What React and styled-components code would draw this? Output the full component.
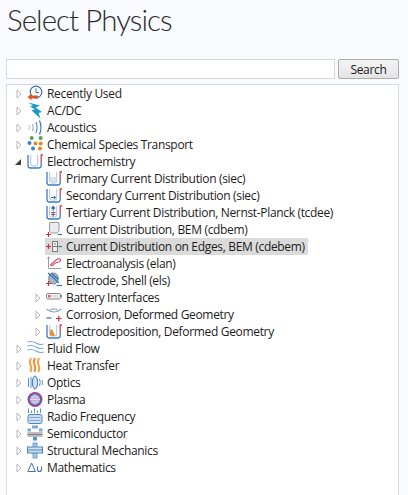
import React from 'react'
import styled, { createGlobalStyle } from 'styled-components'

const Global = createGlobalStyle`
  html, body { margin: 0; padding: 0; background: #f9fbff; }
  body { font-family: "Open Sans", "Noto Sans", sans-serif; color: #1a1a1a; }
`

const Page = styled.div`
  width: 408px;
  height: 495px;
  overflow: hidden;
  padding: 0 9px 0 6px;
  box-sizing: border-box;
`
const Title = styled.h1`
  margin: 0;
  height: 59px;
  padding-left: 1px;
  font-family: Lato, "Open Sans", sans-serif;
  font-size: 29.5px;
  line-height: 39px;
  font-weight: 300;
  letter-spacing: -0.95px;
  color: #2b2b2b;
`
const SearchBar = styled.div`
  display: flex;
  gap: 3px;
  height: 20px;
  margin-bottom: 5px;
`
const SearchInput = styled.input`
  width: 329px;
  height: 20px;
  padding: 0;
  box-sizing: border-box;
  border: 1px solid #d6d8da;
  background: #fff;
  outline: none;
`
const SearchButton = styled.button`
  width: 61px;
  height: 20px;
  padding: 0;
  box-sizing: border-box;
  border: 1px solid #acacac;
  border-radius: 2px;
  background: linear-gradient(#f4f4f4, #e4e4e4);
  font-family: inherit;
  font-size: 12px;
  letter-spacing: -0.3px;
  color: #1a1a1a;
`
const Tree = styled.div`
  height: 420px;
  box-sizing: border-box;
  border: 1px solid #d6d8da;
  border-bottom: 0;
  background: #fff;
`
const Row = styled.div`
  display: flex;
  align-items: center;
  height: 17px;
  padding-left: ${p => p.$indent}px;
`
const Arrow = styled.span`
  flex: none;
  width: 12px;
  height: 17px;
  display: flex;
  align-items: center;
  justify-content: flex-start;
`
const IconBox = styled.svg`
  flex: none;
  width: 18px;
  height: 17px;
  margin-right: 2px;
`
const Label = styled.span`
  padding: 0 3px 0 0;
  height: 17px;
  line-height: 17px;
  font-size: 12px;
  letter-spacing: -0.33px;
  white-space: nowrap;
  color: #1c1c1c;
`
const Selection = styled.div`
  display: flex;
  align-items: center;
  height: 17px;
  margin-left: -1px;
  padding-left: 1px;
  background: ${p => (p.$on ? '#dbdbdb' : 'transparent')};
`

const Expander = ({ open }) => (
  <Arrow>
    <svg width="8" height="10" viewBox="0 0 8 10">
      {open
        ? <path d="M0 8 L6 8 L6 2 Z" fill="#404040" />
        : <path d="M2 1 L6 5 L2 9 Z" fill="#fff" stroke="#b8b8b8" />}
    </svg>
  </Arrow>
)

const beaker = (
  <>
    <path d="M1 2 V12.5 Q1 15 3.5 15 H11.5 Q14.2 15 14.2 12.5 V9" fill="none" stroke="#3f7cc2" strokeWidth="1.3" />
    <path d="M3.7 2 V11 Q3.7 13 5.5 13 H9 Q10.7 13 10.7 11 V2" fill="none" stroke="#a9c5e4" strokeWidth="1" />
    <path d="M14.2 9 V2 H16" fill="none" stroke="#d4405a" strokeWidth="1.3" />
  </>
)

const icons = {
  recent: (
    <>
      <circle cx="9" cy="7" r="5.8" fill="#fff" stroke="#3f6fa8" strokeWidth="1.2" />
      <path d="M9 3.2 V7.5 H12" fill="none" stroke="#3f6fa8" />
      <path d="M0.5 12 L4.5 8.8 V10.5 H11 V13.5 H4.5 V15.2 Z" fill="#e0542c" />
    </>
  ),
  acdc: (
    <path d="M1 0.5 L13 3.5 L8.5 5.5 L15 10 L11.5 11 L13.5 16.5 L4.5 8.5 L8 7.5 L3 4.5 L6 3.5 Z" fill="#1a9bc6" />
  ),
  acoustics: (
    <>
      <path d="M2 6 Q3 8.5 2 11" fill="none" stroke="#a9c8e6" />
      <path d="M5.5 5 Q7 8.5 5.5 12" fill="none" stroke="#7ba8d6" />
      <path d="M9 3 Q11 8.5 9 14" fill="none" stroke="#4f88c4" strokeWidth="1.1" />
      <path d="M12.5 1.5 Q15.5 8.5 12.5 15.5" fill="none" stroke="#3b74b5" strokeWidth="1.2" />
    </>
  ),
  chemical: (
    <>
      <circle cx="4.7" cy="2" r="2" fill="#4ea64e" />
      <circle cx="13.7" cy="2" r="2" fill="#4ea64e" />
      <circle cx="2.5" cy="7" r="2" fill="#3c7fc4" />
      <circle cx="8.5" cy="7.5" r="2" fill="#e08a2a" />
      <circle cx="13.7" cy="7.5" r="2" fill="#e08a2a" />
      <circle cx="6" cy="12.5" r="2" fill="#3c7fc4" />
      <circle cx="13" cy="12.5" r="2" fill="#e08a2a" />
    </>
  ),
  electrochem: beaker,
  primary: <>{beaker}<rect x="4" y="7" width="6.4" height="5.7" fill="#d5e2f2" /></>,
  secondary: <>{beaker}<path d="M5 10.5 H9.5 M8 9 L9.7 10.5 L8 12" fill="none" stroke="#3f6fa8" /></>,
  tertiary: (
    <>
      {beaker}
      <path d="M7.2 2.5 V7 M5.4 4.5 L7.2 2.5 L9 4.5" fill="none" stroke="#3f6fa8" strokeWidth="1.2" />
      <path d="M5 8.5 H9.5 M5 10.5 H9.5" stroke="#d4405a" />
      <path d="M7.2 8 V12.5" stroke="#3f6fa8" strokeWidth="1.2" />
    </>
  ),
  bem: (
    <>
      <path d="M3.5 1.5 H13 V10 L11 12 H5.5 L3.5 10 Z" fill="#ececec" stroke="#9a9a9a" />
      <path d="M0 13.5 H5 M2.5 11 V16" stroke="#d02a44" strokeWidth="1.2" />
      <path d="M11.5 13.5 H16" stroke="#3f6fa8" strokeWidth="1.2" />
    </>
  ),
  edges: (
    <>
      <path d="M0 8.5 H5 M2.5 6 V11" stroke="#d02a44" strokeWidth="1.2" />
      <rect x="6.5" y="3.5" width="5" height="10" fill="#eee" stroke="#7a7a7a" />
      <path d="M6.5 8.5 L11.5 8.5 M8 6 H10" stroke="#7a7a7a" />
      <path d="M12.5 8.5 H16" stroke="#3f6fa8" strokeWidth="1.2" />
    </>
  ),
  elan: (
    <>
      <path d="M2.5 1.5 V13.5 H15.5" fill="none" stroke="#9aa0a8" />
      <path d="M1 3 H4" stroke="#9aa0a8" />
      <path d="M4.5 10 L10 5 Q13 3 14.5 4.5 Q15 6.5 12.5 7 Q9 7.5 7 10 Q5.5 11.5 4.5 10 Z" fill="#fff" stroke="#d8506a" strokeWidth="1.1" />
    </>
  ),
  shell: (
    <>
      <ellipse cx="7.5" cy="6.5" rx="4.8" ry="5.5" fill="#aab8c8" stroke="#6c7f95" />
      <path d="M2 1 L13 11 M5 1 L12 7" stroke="#2f73b5" strokeWidth="1.2" />
      <path d="M0 11.5 H5 M2.5 9 V14" stroke="#d02a44" strokeWidth="1.2" />
      <path d="M10.5 13.5 H16" stroke="#3f6fa8" strokeWidth="1.2" />
    </>
  ),
  battery: (
    <>
      <rect x="0.5" y="4.5" width="14" height="5.5" rx="1.5" fill="#f4f4f4" stroke="#8a8a8a" />
      <rect x="2" y="6" width="2.5" height="2.5" fill="#e35a5a" />
      <rect x="5" y="6" width="8" height="2.5" fill="#e0e0e0" />
      <rect x="14.5" y="6" width="1.5" height="2.5" fill="#8a8a8a" />
    </>
  ),
  corrosion: (
    <>
      <path d="M0.5 3 Q8 9 15.5 3" fill="none" stroke="#7ba8d6" strokeWidth="1.2" />
      <path d="M4 4 Q8 1.5 12 4" fill="none" stroke="#9a9a9a" />
      <path d="M0.5 12 H5.5" stroke="#3f6fa8" strokeWidth="1.2" />
      <path d="M10 12.5 H15.5 M12.8 10 V15.5" stroke="#d02a44" strokeWidth="1.2" />
    </>
  ),
  deposition: (
    <>
      {beaker}
      <path d="M4.2 12.7 V8 Q5.5 4 7 8.5 Q8.5 11 9 12.7 Z" fill="#ec8a2e" />
    </>
  ),
  fluid: (
    <>
      <path d="M0.5 2 Q5 0.5 9 3 T16.5 4" fill="none" stroke="#7ba8d6" strokeWidth="1.1" />
      <path d="M0.5 6 Q5 4.5 9 7 T16.5 8" fill="none" stroke="#7ba8d6" strokeWidth="1.1" />
      <path d="M0.5 10 Q5 8.5 9 11 T16.5 12" fill="none" stroke="#7ba8d6" strokeWidth="1.1" />
    </>
  ),
  heat: (
    <>
      <path d="M4 1 Q2 5 3.5 8 Q5 11 3.5 15" fill="none" stroke="#f4a449" strokeWidth="2" />
      <path d="M8 1 Q6 5 7.5 8 Q9 11 7.5 15" fill="none" stroke="#ef8f2f" strokeWidth="2" />
      <path d="M12 1 Q10 5 11.5 8 Q13 11 11.5 15" fill="none" stroke="#f4a449" strokeWidth="2" />
    </>
  ),
  optics: (
    <>
      <path d="M1.5 4 V13 M4 3 V14" stroke="#5b8fcb" />
      <ellipse cx="8" cy="8.5" rx="2.6" ry="6.5" fill="#cfe0f2" stroke="#3f74b5" />
      <path d="M12.5 5 Q14 8.5 12.5 12 M15 6 Q16 8.5 15 11" fill="none" stroke="#5b8fcb" />
    </>
  ),
  plasma: (
    <>
      <circle cx="8" cy="8.5" r="7.5" fill="#8a4f9e" />
      <circle cx="8" cy="8.5" r="5" fill="#a9bcdc" />
      <circle cx="8" cy="8.5" r="1.7" fill="#e8308c" />
      <path d="M8 3.5 V13.5 M3 8.5 H13 M4.5 5 L11.5 12 M11.5 5 L4.5 12" stroke="#fff" strokeWidth="0.6" />
    </>
  ),
  radio: (
    <>
      <path d="M1.5 0.5 V5 M4.5 2.5 V5 M7.5 0.5 V5 M10.5 2.5 V5 M13.5 0.5 V5" stroke="#5b8fcb" />
      <rect x="1" y="6.5" width="14" height="9" rx="2" fill="#cfe0f2" stroke="#4f83bd" />
      <path d="M2.5 9.5 H13.5 M2.5 12.5 H13.5" stroke="#7ba8d6" />
    </>
  ),
  semi: (
    <>
      <rect x="5" y="0.5" width="6" height="3" fill="#7ba8d6" />
      <rect x="0.5" y="3.5" width="3.5" height="3" fill="#7ba8d6" />
      <rect x="12" y="3.5" width="3.5" height="3" fill="#7ba8d6" />
      <rect x="0.5" y="7" width="15" height="5" fill="#bdbdbd" />
      <path d="M0.5 9.5 H15.5" stroke="#808080" />
      <rect x="6" y="12" width="4" height="3.5" fill="#5b8fcb" />
    </>
  ),
  structural: (
    <>
      <rect x="6" y="1" width="4" height="15" fill="#a9c5e4" stroke="#5b8fcb" strokeWidth="0.8" />
      <rect x="0.5" y="5" width="15" height="6" fill="#cfe0f2" stroke="#4f83bd" />
      <path d="M0.5 8 H15.5" stroke="#4f83bd" />
    </>
  ),
  math: (
    <>
      <path d="M4.6 4 L0.8 12.5 H8.4 Z" fill="none" stroke="#3f74b5" strokeWidth="1" />
      <path d="M10.5 7.5 V10.5 Q10.5 12.5 12.5 12.5 Q14.5 12.5 14.5 10.5 V7.5" fill="none" stroke="#3f74b5" strokeWidth="1.1" />
    </>
  ),
}

const rows = [
  { icon: 'recent', label: 'Recently Used' },
  { icon: 'acdc', label: 'AC/DC' },
  { icon: 'acoustics', label: 'Acoustics' },
  { icon: 'chemical', label: 'Chemical Species Transport' },
  { icon: 'electrochem', label: 'Electrochemistry', open: true },
  { icon: 'primary', label: 'Primary Current Distribution (siec)', leaf: true },
  { icon: 'secondary', label: 'Secondary Current Distribution (siec)', leaf: true },
  { icon: 'tertiary', label: 'Tertiary Current Distribution, Nernst-Planck (tcdee)', leaf: true },
  { icon: 'bem', label: 'Current Distribution, BEM (cdbem)', leaf: true },
  { icon: 'edges', label: 'Current Distribution on Edges, BEM (cdebem)', leaf: true, selected: true },
  { icon: 'elan', label: 'Electroanalysis (elan)', leaf: true },
  { icon: 'shell', label: 'Electrode, Shell (els)', leaf: true },
  { icon: 'battery', label: 'Battery Interfaces', sub: true },
  { icon: 'corrosion', label: 'Corrosion, Deformed Geometry', sub: true },
  { icon: 'deposition', label: 'Electrodeposition, Deformed Geometry', sub: true },
  { icon: 'fluid', label: 'Fluid Flow' },
  { icon: 'heat', label: 'Heat Transfer' },
  { icon: 'optics', label: 'Optics' },
  { icon: 'plasma', label: 'Plasma' },
  { icon: 'radio', label: 'Radio Frequency' },
  { icon: 'semi', label: 'Semiconductor' },
  { icon: 'structural', label: 'Structural Mechanics' },
  { icon: 'math', label: 'Mathematics' },
]

const TreeRow = ({ row }) => {
  const indent = row.leaf ? 39 : row.sub ? 27 : 8
  return (
    <Row $indent={indent}>
      {!row.leaf && <Expander open={row.open} />}
      <Selection $on={row.selected}>
        <IconBox viewBox="0 0 18 17">{icons[row.icon]}</IconBox>
        <Label>{row.label}</Label>
      </Selection>
    </Row>
  )
}

const App = () => (
  <Page>
    <Global />
    <Title>Select Physics</Title>
    <SearchBar>
      <SearchInput type="text" />
      <SearchButton>Search</SearchButton>
    </SearchBar>
    <Tree>
      {rows.map(r => <TreeRow key={r.label} row={r} />)}
    </Tree>
  </Page>
)

export default App
